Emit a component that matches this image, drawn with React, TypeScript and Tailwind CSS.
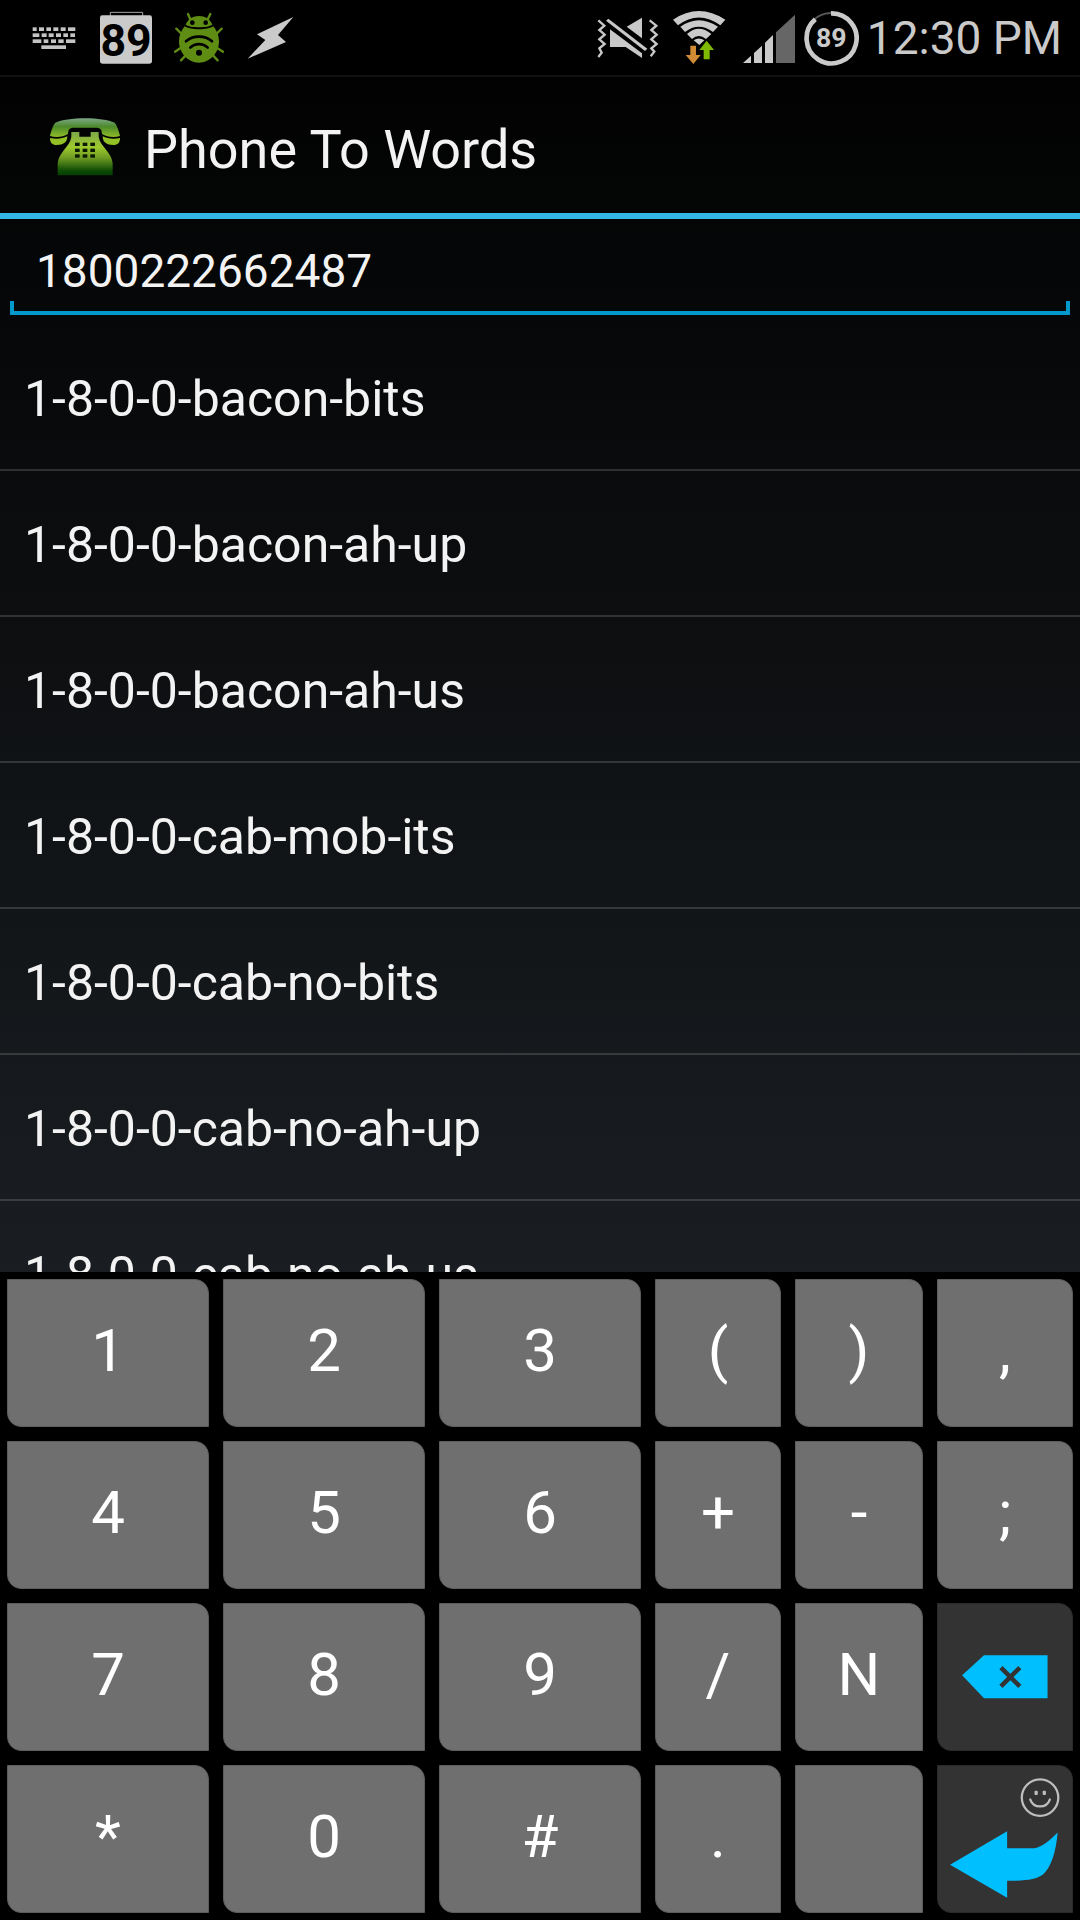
import React from "react";

const ROWS = [
  "1-8-0-0-bacon-bits",
  "1-8-0-0-bacon-ah-up",
  "1-8-0-0-bacon-ah-us",
  "1-8-0-0-cab-mob-its",
  "1-8-0-0-cab-no-bits",
  "1-8-0-0-cab-no-ah-up",
  "1-8-0-0-cab-no-ah-us",
];

const KEYS = [
  "1", "2", "3", "(", ")", ",",
  "4", "5", "6", "+", "-", ";",
  "7", "8", "9", "/", "N", "delete",
  "*", "0", "#", ".", "space", "enter",
];

function KeyboardIcon() {
  const rows: [number, number[][]][] = [
    [82, [[98, 12], [117, 15], [139, 14], [160, 15], [182, 15], [204, 22]]],
    [100, [[98, 20], [125, 15], [146, 15], [168, 15], [190, 14], [211, 14]]],
    [118, [[98, 26], [131, 14], [153, 15], [175, 16], [198, 28]]],
    [136, [[124, 74]]],
  ];
  return (
    <svg viewBox="96 78 132 72" className="h-6 w-11" aria-hidden="true">
      {rows.map(([y, keys]) =>
        keys.map(([x, w]) => <rect key={`${y}-${x}`} x={x} y={y} width={w} height={11} fill="#c4c4c4" />)
      )}
    </svg>
  );
}

function BatteryBadge() {
  return (
    <svg viewBox="294 33 162 162" className="size-[54px]" aria-hidden="true">
      <path d="M331 48V37h97v11" fill="none" stroke="#a8a8a8" strokeWidth="3" />
      <rect x="300" y="46" width="156" height="145" rx="7" fill="#cacaca" />
      <text x="378" y="167" textAnchor="middle" fontFamily="Roboto" fontWeight="700" fontSize="134" fill="#000">89</text>
    </svg>
  );
}

function BugIcon() {
  return (
    <svg viewBox="519 36 150 156" className="h-[52px] w-[50px]" aria-hidden="true">
      <g stroke="#5f8c12" strokeWidth="7" fill="none" strokeLinecap="round">
        <path d="M561 42l8 18M628 42l-9 18M526 86l16 16M662 86l-16 16M522 155l20-13M666 155l-21-13M540 181l14-15M650 181l-14-15" />
      </g>
      <path d="M554 74c8-18 22-26 40-26s32 8 40 26c-12 10-68 10-80 0z" fill="#5f8c12" />
      <path d="M551 79c18 12 68 12 86 0 10 12 17 27 17 45 0 36-28 64-60 64s-60-28-60-64c0-18 7-33 17-45z" fill="#5f8c12" />
      <circle cx="574" cy="68" r="7" fill="#000" />
      <circle cx="614" cy="68" r="7" fill="#000" />
      <g stroke="#000" strokeWidth="8" fill="none" strokeLinecap="round">
        <path d="M555 124c20-19 58-19 78 0M568 143c14-14 38-14 52 0" />
      </g>
      <circle cx="594" cy="158" r="9" fill="#000" />
    </svg>
  );
}

function BoltIcon() {
  return (
    <svg viewBox="738 42 144 144" className="size-12" aria-hidden="true">
      <path d="M880 51L771 103l25 17-53 56 115-50-24-21z" fill="#cacaca" />
    </svg>
  );
}

function MuteIcon() {
  return (
    <svg viewBox="48 36 198 150" className="h-[50px] w-[66px]" aria-hidden="true">
      <g fill="none" stroke="#c8c8c8" strokeWidth="7">
        <path d="M52 58l18 16-15 13 16 14-16 14 16 14-16 13 7 13-10 13" />
        <path d="M206 58l20 16-15 13 16 14-16 14 16 14-16 13 9 10-11 14" />
      </g>
      <path d="M75 59l7-6 117 90-7 7z" fill="#c8c8c8" />
      <path d="M137 77l46-27v62zM87 85l96 72v14l-49-33H87z" fill="#c8c8c8" />
    </svg>
  );
}

function WifiIcon() {
  return (
    <svg viewBox="267 27 174 165" className="h-[55px] w-[58px]" aria-hidden="true">
      <path d="M273 56Q350 4 430 56l-15 17Q350 26 288 73z" fill="#cacaca" />
      <path d="M295 77Q350 38 408 77l-15 16Q350 61 309 93z" fill="#cacaca" />
      <path d="M315 99Q350 67 388 99l-16 15Q350 96 330 114z" fill="#cacaca" />
      <path d="M335 118Q350 107 367 118l-15 14z" fill="#cacaca" />
      <path d="M325 134h17v28h14l-22 27-23-27h14z" fill="#d08b34" />
      <path d="M374 119l22 28h-13v28h-18v-28h-13z" fill="#7fb800" />
    </svg>
  );
}

function SignalIcon() {
  return (
    <svg viewBox="468 39 174 150" className="h-[50px] w-[58px]" aria-hidden="true">
      <path d="M486 189l24-22v22zM519 159l24-22v52h-24zM552 128l24-23v84h-24z" fill="#cacaca" />
      <path d="M585 97l57-53v145h-57z" fill="#666" />
    </svg>
  );
}

function BatteryRing() {
  return (
    <svg viewBox="666 27 168 168" className="size-14" aria-hidden="true">
      <circle cx="750" cy="111" r="75" fill="none" stroke="#555" strokeWidth="6" />
      <path d="M750 37A75 75 0 1 1 703 55" fill="none" stroke="#cacaca" strokeWidth="14" />
      <text x="751" y="139" textAnchor="middle" fontFamily="Roboto" fontWeight="700" fontSize="80" fill="#cacaca">89</text>
    </svg>
  );
}

function PhoneIcon() {
  return (
    <svg viewBox="0 0 210 174" className="h-[58px] w-[70px]" aria-hidden="true">
      <defs>
        <linearGradient id="handset" x1="0" y1="0" x2="0" y2="1">
          <stop offset="0" stopColor="#7fa88a" />
          <stop offset="0.45" stopColor="#4c8a2a" />
          <stop offset="1" stopColor="#8fbc28" />
        </linearGradient>
        <linearGradient id="body" x1="0" y1="0" x2="0" y2="1">
          <stop offset="0" stopColor="#7da84a" />
          <stop offset="0.35" stopColor="#9dc92e" />
          <stop offset="0.6" stopColor="#6d9a22" />
          <stop offset="0.9" stopColor="#0b4a05" />
          <stop offset="1" stopColor="#063d03" />
        </linearGradient>
      </defs>
      <path d="M0 54C4 36 10 20 16 14 50-4 160-4 194 14c6 6 12 22 16 40-20 6-40 2-54-6 0-14-6-18-14-19H68c-8 1-14 5-14 19C40 56 20 60 0 54z" fill="url(#handset)" />
      <path d="M0 60c20 5 38 2 52-5 0 18-12 26-32 26C6 81 0 74 0 60zM210 60c-20 5-38 2-52-5 0 18 12 26 32 26 14 0 20-7 20-21z" fill="#93c024" />
      <path d="M64 42h24v14h34V42h24v14c4 30 40 46 42 80v36H23v-36c2-34 38-50 41-80z" fill="url(#body)" />
      {[74, 92, 109].map((y) =>
        [75, 98, 121].map((x) => <rect key={`${x}-${y}`} x={x} y={y} width="14" height="10" fill="#0a1a02" />)
      )}
    </svg>
  );
}

function BackspaceGlyph() {
  return (
    <svg viewBox="471 70 411 444" className="size-full" aria-hidden="true">
      <path d="M545 287l67-62h195v132H612z" fill="#00bfff" />
      <path d="M664 263l58 58M722 263l-58 58" stroke="#333" strokeWidth="14" />
    </svg>
  );
}

function EnterGlyph() {
  return (
    <svg viewBox="470 556 411 444" className="size-full" aria-hidden="true">
      <circle cx="783" cy="651" r="56" fill="none" stroke="#bebebe" strokeWidth="7" />
      <path d="M753 657c10 28 50 28 60 0" fill="none" stroke="#bebebe" strokeWidth="7" strokeLinecap="round" />
      <rect x="766" y="630" width="10" height="13" rx="3" fill="#bebebe" />
      <rect x="791" y="630" width="10" height="13" rx="3" fill="#bebebe" />
      <path d="M507 857l175-103v52h84c24-4 48-24 71-48-6 64-20 106-46 130-20 14-50 19-109 18v52z" fill="#00bfff" />
    </svg>
  );
}

function Key({ name }: { name: string }) {
  const base = "m-[7px] flex h-[148px] items-center justify-center overflow-hidden rounded-tr-[14px] rounded-bl-[14px] border ";
  if (name === "delete" || name === "enter") {
    return (
      <button type="button" aria-label={name} className={base + "border-[#2a2a2a] bg-[#333333]"}>
        {name === "delete" ? <BackspaceGlyph /> : <EnterGlyph />}
      </button>
    );
  }
  return (
    <button type="button" aria-label={name} className={base + "border-[#5c5c5c] bg-[#6f6f6f] pb-1 text-[60px] leading-none text-white"}>
      {name === "space" ? "" : name}
    </button>
  );
}

export default function App() {
  return (
    <div className="flex h-screen flex-col overflow-hidden bg-linear-to-b/srgb from-black to-[#272d33] font-['Roboto',sans-serif] text-[#f3f3f3]">
      <div className="flex h-[77px] shrink-0 items-center justify-between border-b-2 border-[#111111] bg-black pr-[18px] pl-8 text-[#cacaca]">
        <div className="flex items-center gap-[22px]">
          <KeyboardIcon />
          <BatteryBadge />
          <BugIcon />
          <BoltIcon />
        </div>
        <div className="flex items-center gap-2">
          <MuteIcon />
          <WifiIcon />
          <SignalIcon />
          <BatteryRing />
          <span className="text-[46px] leading-none">12:30 PM</span>
        </div>
      </div>

      <header className="flex h-[142px] shrink-0 items-center gap-6 border-b-[6px] border-[#33b5e5] pt-1 pl-[50px]">
        <PhoneIcon />
        <h1 className="pt-1.5 text-[54px] leading-none">Phone To Words</h1>
      </header>

      <div className="relative mx-2.5 h-24 shrink-0 border-b-4 border-[#0099cc]">
        <input
          type="tel"
          aria-label="Phone number"
          defaultValue="1800222662487"
          className="h-full w-full bg-transparent px-[26px] pt-3 text-[46px] outline-none"
        />
        <span className="absolute bottom-0 left-0 h-2.5 w-1 bg-[#0099cc]" />
        <span className="absolute right-0 bottom-0 h-2.5 w-1 bg-[#0099cc]" />
      </div>

      <ul className="min-h-0 flex-1 overflow-hidden pt-2.5">
        {ROWS.map((word) => (
          <li key={word} className="flex h-[146px] items-center border-b-2 border-white/15 px-6 pt-1 text-[50px] leading-none">
            {word}
          </li>
        ))}
      </ul>

      <div className="grid shrink-0 grid-cols-[216fr_216fr_216fr_140fr_142fr_150fr] bg-black">
        {KEYS.map((key) => (
          <Key key={key} name={key} />
        ))}
      </div>
    </div>
  );
}
